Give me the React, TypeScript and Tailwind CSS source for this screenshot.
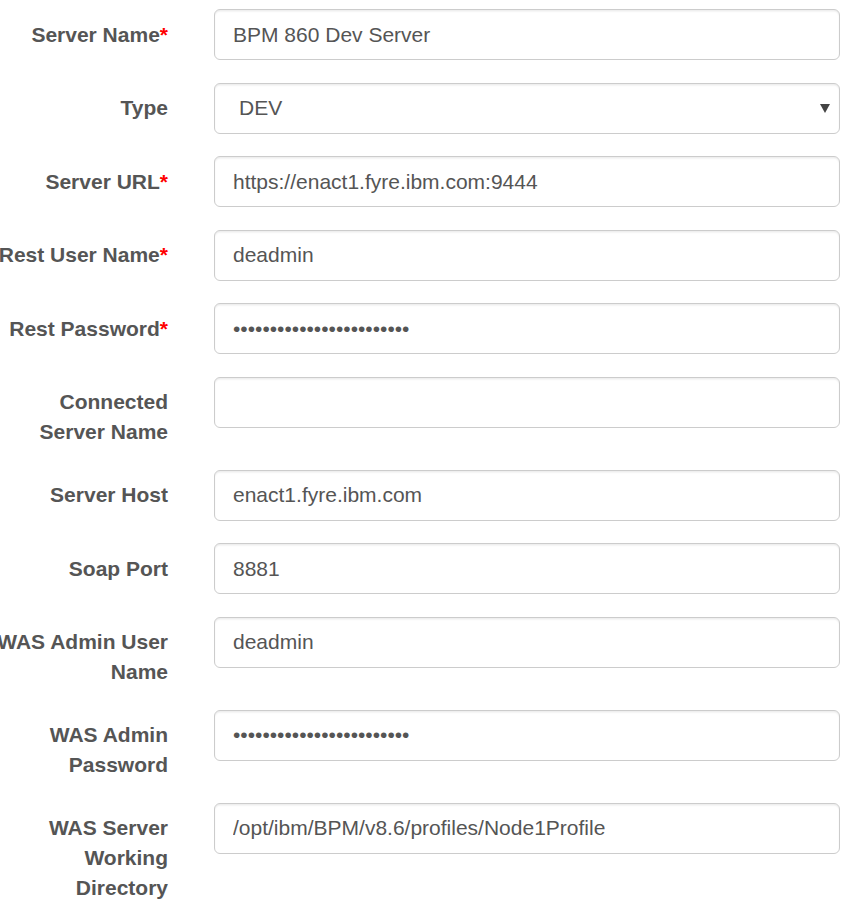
import React from "react";

type Field = {
  label: string;
  required?: boolean;
  value?: string;
  kind?: "text" | "password" | "select";
};

const fields: Field[] = [
  { label: "Server Name", required: true, value: "BPM 860 Dev Server" },
  { label: "Type", value: "DEV", kind: "select" },
  { label: "Server URL", required: true, value: "https://enact1.fyre.ibm.com:9444" },
  { label: "Rest User Name", required: true, value: "deadmin" },
  { label: "Rest Password", required: true, value: "xxxxxxxxxxxxxxxxxxxxxxxx", kind: "password" },
  { label: "Connected Server Name", value: "" },
  { label: "Server Host", value: "enact1.fyre.ibm.com" },
  { label: "Soap Port", value: "8881" },
  { label: "WAS Admin User Name", value: "deadmin" },
  { label: "WAS Admin Password", value: "xxxxxxxxxxxxxxxxxxxxxxxx", kind: "password" },
  { label: "WAS Server Working Directory", value: "/opt/ibm/BPM/v8.6/profiles/Node1Profile" },
];

const boxCls =
  "h-[51px] w-[626px] rounded-[6px] border-[1.5px] border-[#cccccc] bg-white px-[18px] text-[21px] text-[#555555] shadow-[inset_0_1.5px_1.5px_rgba(0,0,0,0.075)] outline-none";

const App = () => {
  return (
    <div
      className="min-h-[908px] w-[852px] overflow-hidden bg-white pt-[9px]"
      style={{ fontFamily: '"Liberation Sans", Arial, sans-serif' }}
    >
      <form className="ml-[-8px] flex flex-col">
        {fields.map((f) => (
          <div key={f.label} className="mb-[22.5px] flex items-start gap-[46px]">
            <label className="w-[176px] shrink-0 pt-[10.5px] text-right text-[21px] font-bold leading-[30px] text-[#555555]">
              {f.label}
              {f.required && <span className="text-[#ff0000]">*</span>}
            </label>
            {f.kind === "select" ? (
              <div className={`${boxCls} flex items-center justify-between pl-[24px] pr-[9px]`}>
                <span>{f.value}</span>
                <svg width="10" height="9" viewBox="0 0 10 9">
                  <path d="M0 0 H10 L5 9 Z" fill="#444444" />
                </svg>
              </div>
            ) : (
              <input
                className={boxCls}
                type={f.kind === "password" ? "password" : "text"}
                value={f.value}
                readOnly
              />
            )}
          </div>
        ))}
      </form>
    </div>
  );
};

export default App;
